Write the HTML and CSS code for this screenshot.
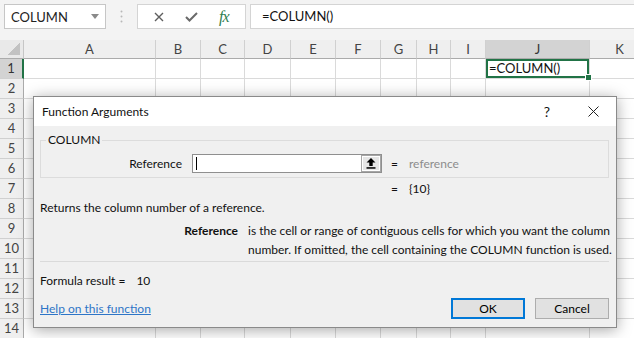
FILE: index.html
```html
<!doctype html>
<html lang="en">
    <head>
        <meta charset="UTF-8" />
        <title>COLUMN - Function Arguments</title>
        <link rel="stylesheet" href="styles.css">
    </head>
    <body>
        <div class="formula-bar">
            <div class="name-box">
                <span>COLUMN</span>
                <svg class="caret-down" width="8" height="5" viewBox="0 0 8 5"><path d="M0 0h8L4 5z" fill="#8a8a8a"/></svg>
            </div>
            <div class="grip">
                <svg width="3" height="13" viewBox="0 0 3 13"><circle cx="1.5" cy="1.5" r="1" fill="#b8b8b8"/><circle cx="1.5" cy="6.5" r="1" fill="#b8b8b8"/><circle cx="1.5" cy="11.5" r="1" fill="#b8b8b8"/></svg>
            </div>
            <div class="fx-box">
                <svg width="10" height="10" viewBox="0 0 10 10"><path d="M1 1l8 8M9 1l-8 8" stroke="#5e5e5e" stroke-width="1.4"/></svg>
                <svg width="13" height="10" viewBox="0 0 13 10"><path d="M1 5l3.5 3.5L12 1" stroke="#6a6a6a" stroke-width="2" fill="none"/></svg>
                <span class="fx">fx</span>
            </div>
            <div class="formula-input">=COLUMN()</div>
        </div>

        <div class="sheet"></div>

        <div class="dialog">
            <div class="title-bar">
                <span class="title">Function Arguments</span>
                <span class="title-btn">?</span>
                <span class="title-btn">
                    <svg width="11" height="11" viewBox="0 0 11 11"><path d="M0.5 0.5l10 10M10.5 0.5l-10 10" stroke="#222" stroke-width="1"/></svg>
                </span>
            </div>
            <div class="dialog-body">
                <fieldset class="group">
                    <legend>COLUMN</legend>
                    <div class="arg-row">
                        <label class="arg-label">Reference</label>
                        <div class="arg-input">
                            <span class="text-caret"></span>
                            <span class="collapse-btn">
                                <svg width="10" height="11" viewBox="0 0 10 11"><path d="M5 0L0.5 4.5H3.3V8H6.7V4.5H9.5z" fill="#000"/><rect x="0.5" y="9.2" width="9" height="1.5" fill="#000"/></svg>
                            </span>
                        </div>
                        <span class="eq">=</span>
                        <span class="arg-value">reference</span>
                    </div>
                </fieldset>

                <div class="eq-row"><span class="eq">=</span><span>{10}</span></div>

                <div class="summary">Returns the column number of a reference.</div>

                <div class="arg-help">
                    <span class="arg-name">Reference</span>
                    <span class="arg-text">is the cell or range of contiguous cells for which you want the column<br>number. If omitted, the cell containing the COLUMN function is used.</span>
                </div>

                <div class="divider"></div>

                <div class="result">Formula result =<span class="result-val">10</span></div>

                <div class="footer">
                    <a class="help-link" href="#">Help on this function</a>
                    <button class="btn btn-default">OK</button>
                    <button class="btn">Cancel</button>
                </div>
            </div>
        </div>

        <script>
            // build the worksheet grid behind the dialog
            const cols = ["A", "B", "C", "D", "E", "F", "G", "H", "I", "J", "K"];
            let html = '<div class="corner"><span></span></div>';
            cols.forEach((c) => {
                html += `<div class="col-head${c === "J" ? " sel" : ""}">${c}</div>`;
            });
            for (let r = 1; r <= 14; r++) {
                html += `<div class="row-head${r === 1 ? " sel" : ""}">${r}</div>`;
                cols.forEach((c) => {
                    if (r === 1 && c === "J") {
                        html += '<div class="cell active">=COLUMN()</div>';
                    } else {
                        html += '<div class="cell"></div>';
                    }
                });
            }
            document.querySelector(".sheet").innerHTML = html;
        </script>
    </body>
</html>
```
FILE: styles.css
```css
body {
    margin: 0;
    width: 634px;
    height: 338px;
    overflow: hidden;
    position: relative;
    background: #fff;
    font-family: "Lato", "Open Sans", sans-serif;
    color: #000;
}
.formula-bar {
    height: 40px;
    box-sizing: border-box;
    padding-top: 4px;
    background: #f3f3f3;
    display: flex;
    align-items: flex-start;
}
.name-box {
    margin-left: 4px;
    width: 102px;
    height: 25px;
    box-sizing: border-box;
    border: 1px solid #c6c6c6;
    background: #fff;
    display: flex;
    align-items: center;
    justify-content: space-between;
    padding: 0 6px 0 6px;
    font-size: 13px;
    color: #222;
}
.grip {
    width: 31px;
    height: 25px;
    display: flex;
    align-items: center;
    justify-content: center;
}
.fx-box {
    width: 109px;
    height: 25px;
    box-sizing: border-box;
    border: 1px solid #d4d4d4;
    background: #fff;
    display: flex;
    align-items: center;
    justify-content: space-around;
    padding: 0 6px;
}
.fx {
    font-family: "Liberation Serif", serif;
    font-style: italic;
    font-size: 16px;
    color: #2f8050;
    letter-spacing: -1px;
    line-height: 16px;
}
.formula-input {
    flex: 1;
    margin-left: 4px;
    height: 25px;
    box-sizing: border-box;
    border: 1px solid #d4d4d4;
    border-right: none;
    background: #fff;
    padding-left: 11px;
    font-size: 13px;
    line-height: 23px;
    color: #111;
}
.sheet {
    display: grid;
    grid-template-columns: 24px 132px 45px 44px 46px 45px 45px 36px 34px 35px 104px 60px;
    grid-template-rows: 19px repeat(14, 20px);
    font-size: 13px;
    color: #444;
}
.corner {
    background: #e9e9e9;
    border-right: 1px solid #c6c6c6;
    border-bottom: 1px solid #ababab;
    box-sizing: border-box;
    display: flex;
    align-items: flex-end;
    justify-content: flex-end;
    padding: 0 3px 3px 0;
}
.corner span {
    width: 12px;
    height: 12px;
    background: linear-gradient(to bottom right, transparent 50%, #c2c2c2 50%);
}
.col-head {
    background: #efefef;
    border-right: 1px solid #d0d0d0;
    border-bottom: 1px solid #ababab;
    box-sizing: border-box;
    text-align: center;
    line-height: 18px;
}
.row-head {
    background: #efefef;
    border-right: 1px solid #ababab;
    border-bottom: 1px solid #d0d0d0;
    box-sizing: border-box;
    text-align: center;
    line-height: 19px;
}
.col-head.sel,
.row-head.sel {
    background: #d3d3d3;
    color: #333;
}
.row-head.sel {
    border-right: 2px solid #217346;
}
.cell {
    border-right: 1px solid #dadada;
    border-bottom: 1px solid #dadada;
    box-sizing: border-box;
}
.cell.active {
    position: relative;
    box-shadow: inset 0 0 0 2px #217346;
    padding-left: 3px;
    line-height: 19px;
    color: #111;
    font-size: 13px;
}
.cell.active::after {
    content: "";
    position: absolute;
    right: -3px;
    bottom: -3px;
    width: 5px;
    height: 5px;
    background: #217346;
    border: 1px solid #fff;
}
.dialog {
    position: absolute;
    left: 33px;
    top: 96px;
    width: 584px;
    height: 232px;
    box-sizing: border-box;
    border: 1px solid #8a8a8a;
    background: #f0f0f0;
    box-shadow: 0 2px 14px rgba(0, 0, 0, 0.35);
    font-size: 12px;
    color: #111;
}
.title-bar {
    height: 29px;
    background: #fff;
    display: flex;
    align-items: center;
    padding-left: 8px;
}
.title {
    flex: 1;
}
.title-btn {
    width: 46px;
    text-align: center;
    font-size: 14px;
    display: flex;
    justify-content: center;
    align-items: center;
}
.dialog-body {
    padding: 7px 6px 0;
}
.group {
    margin: 0 1px 0 0;
    padding: 7px 0 4px;
    border: 1px solid #dcdcdc;
    min-inline-size: 0;
}
.group legend {
    margin-left: 5px;
    padding: 0 2px;
    line-height: 14px;
}
.arg-row {
    display: flex;
    align-items: center;
    height: 19px;
}
.arg-label {
    width: 141px;
    text-align: right;
    margin-right: 10px;
}
.arg-input {
    width: 190px;
    height: 19px;
    box-sizing: border-box;
    border: 1px solid #8f8f8f;
    background: #fff;
    display: flex;
    align-items: center;
}
.text-caret {
    width: 1px;
    height: 13px;
    background: #000;
    margin-left: 3px;
}
.collapse-btn {
    margin-left: auto;
    width: 20px;
    height: 17px;
    box-sizing: border-box;
    border: 1px solid #a6a6a6;
    box-shadow: inset 0 0 0 1px #fff;
    background: #e6e6e6;
    display: flex;
    align-items: center;
    justify-content: center;
}
.eq {
    margin-left: 9px;
    width: 8px;
}
.arg-value {
    margin-left: 10px;
    color: #8c8c8c;
}
.eq-row {
    margin-top: 2px;
    line-height: 18px;
    padding-left: 342px;
    display: flex;
}
.eq-row span:last-child {
    margin-left: 10px;
}
.summary {
    margin-top: 1px;
    line-height: 18px;
}
.arg-help {
    margin-top: 4px;
    display: grid;
    grid-template-columns: 198px 1fr;
    column-gap: 10px;
    line-height: 19px;
}
.arg-name {
    font-weight: bold;
    text-align: right;
}
.arg-text {
    white-space: nowrap;
}
.divider {
    margin: 2px 1px 0 0;
    height: 1px;
    background: #dadada;
}
.result {
    margin-top: 10px;
    line-height: 18px;
}
.result-val {
    margin-left: 11px;
}
.footer {
    margin-top: 8px;
    display: flex;
    align-items: center;
    gap: 10px;
    padding-right: 1px;
}
.help-link {
    flex: 1;
    color: #2e75c7;
    text-decoration: underline;
}
.btn {
    width: 74px;
    height: 21px;
    box-sizing: border-box;
    border: 1px solid #adadad;
    background: #e1e1e1;
    font-family: inherit;
    font-size: 12px;
    color: #000;
    padding: 0;
}
.btn-default {
    border: 2px solid #0078d7;
}
```
